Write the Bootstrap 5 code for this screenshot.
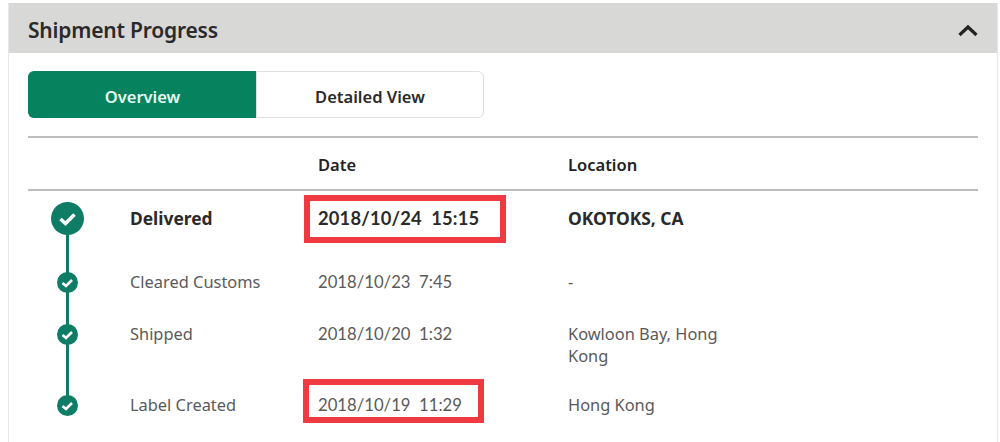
<!DOCTYPE html>
<html lang="en">
<head>
  <meta charset="UTF-8">
  <title>Shipment Progress</title>
  <link rel="stylesheet" href="https://cdn.jsdelivr.net/npm/bootstrap@5.3.3/dist/css/bootstrap.min.css">
  <style>
    body { background: #fff; font-family: "Noto Sans", sans-serif; color: #5a5a5a; overflow: hidden; }
    .ship-panel { margin: 3px 2px 0 8px; height: 439px; border-left: 1px solid #e8e8e8; border-right: 1px solid #e8e8e8; }
    .ship-head { height: 50px; background: #d8d8d6; padding: 5px 19px 0; color: #2a2a2a; }
    .ship-head h2 { font-size: 21px; font-weight: 600; margin: 0; letter-spacing: -.2px; }
    .ship-body { padding: 18px 19px 0; }
    .ship-tabs { width: 456px; height: 47px; margin-bottom: 18px; }
    .ship-tabs .btn { flex: 1 1 50%; font-size: 16.5px; font-weight: 600; color: #2a2a2a; border: 1px solid #e0e0e0; background: #fff; border-radius: 6px; padding: 5px 0 0; }
    .ship-tabs .btn:first-child { border-top-right-radius: 0; border-bottom-right-radius: 0; border-right: 0; }
    .ship-tabs .btn:last-child { border-top-left-radius: 0; border-bottom-left-radius: 0; }
    .ship-tabs .btn.active { background: #07825f; border-color: #07825f; color: #e6fbf3; }
    .track-table { --bs-table-color: #5a5a5a; table-layout: fixed; width: 100%; margin: 0; border-collapse: separate; border-spacing: 0; border-top: 2px solid #bdbdbd; font-size: 16.4px; }
    .track-table th, .track-table td { padding: 0; border: 0; vertical-align: top; color: #5a5a5a; background: none; }
    .track-table thead th { height: 53px; padding-top: 4px; border-bottom: 2px solid #bdbdbd; vertical-align: middle; font-weight: 600; font-size: 16.5px; color: #222; }
    .col-rail { width: 102px; }
    .col-name { width: 188px; }
    .col-date { width: 250px; }
    .track-table tbody td { padding-top: 12px; line-height: 22px; }
    .track-table .track-row-main td { height: 68px; padding-top: 16px; font-size: 17.4px; font-weight: 700; color: #2a2a2a; }
    .track-row-a td { height: 52px; }
    .track-row-b td { height: 63px; }
    .track-table .track-row-c td { height: 60px; padding-top: 20px; }
    .track-table tbody .rail-cell { position: relative; padding: 0; }
    .rail-line { position: absolute; left: 38px; width: 3px; top: 0; bottom: 0; background: #0f7d65; }
    .track-row-main .rail-line { top: 28px; }
    .track-row-c .rail-line { bottom: 29px; }
    .rail-dot { position: absolute; left: 29px; top: 13px; width: 21px; height: 21px; }
    .track-row-main .rail-dot { left: 23px; top: 11px; width: 33px; height: 33px; }
    .track-row-c .rail-dot { top: 21px; }
    .date-wrap { position: relative; display: block; font-family: Lato, sans-serif; font-size: 16.7px; white-space: pre; }
    .track-row-main .date-wrap { font-size: 18.3px; letter-spacing: .2px; }
    .mark-box { position: absolute; border: 6px solid #ee3a40; pointer-events: none; }
    .mark-box-a { left: -14px; top: -12px; width: 202px; height: 48px; }
    .mark-box-b { left: -15px; top: -15px; width: 181px; height: 44px; }
    .loc-text { max-width: 160px; }
  </style>
</head>
<body>
  <div class="ship-panel">
    <div class="ship-head d-flex align-items-center justify-content-between">
      <h2>Shipment Progress</h2>
      <svg width="20" height="13" viewBox="0 0 20 13" aria-hidden="true"><path d="M1.5 11 10 3l8.5 8" fill="none" stroke="#222" stroke-width="3.2"/></svg>
    </div>
    <div class="ship-body">
      <div class="ship-tabs d-flex">
        <button class="btn active" type="button">Overview</button>
        <button class="btn" type="button">Detailed View</button>
      </div>
      <table class="table track-table">
        <colgroup><col class="col-rail"><col class="col-name"><col class="col-date"><col></colgroup>
        <thead>
          <tr><th></th><th></th><th>Date</th><th>Location</th></tr>
        </thead>
        <tbody>
          <tr class="track-row-main">
            <td class="rail-cell"><span class="rail-line"></span>
              <svg class="rail-dot" viewBox="0 0 33 33" aria-hidden="true"><circle cx="16.5" cy="16.5" r="16.5" fill="#0f7d65"/><path d="M9.5 17l5 4.5 9-9" fill="none" stroke="#fff" stroke-width="3.6"/></svg>
            </td>
            <td>Delivered</td>
            <td><span class="date-wrap">2018/10/24  15:15<span class="mark-box mark-box-a"></span></span></td>
            <td>OKOTOKS, CA</td>
          </tr>
          <tr class="track-row-a">
            <td class="rail-cell"><span class="rail-line"></span>
              <svg class="rail-dot" viewBox="0 0 21 21" aria-hidden="true"><circle cx="10.5" cy="10.5" r="10.5" fill="#0f7d65"/><path d="M5.5 11l3.5 3 6-6" fill="none" stroke="#fff" stroke-width="2.6"/></svg>
            </td>
            <td>Cleared Customs</td>
            <td><span class="date-wrap">2018/10/23  7:45</span></td>
            <td>-</td>
          </tr>
          <tr class="track-row-b">
            <td class="rail-cell"><span class="rail-line"></span>
              <svg class="rail-dot" viewBox="0 0 21 21" aria-hidden="true"><circle cx="10.5" cy="10.5" r="10.5" fill="#0f7d65"/><path d="M5.5 11l3.5 3 6-6" fill="none" stroke="#fff" stroke-width="2.6"/></svg>
            </td>
            <td>Shipped</td>
            <td><span class="date-wrap">2018/10/20  1:32</span></td>
            <td><div class="loc-text">Kowloon Bay, Hong Kong</div></td>
          </tr>
          <tr class="track-row-c">
            <td class="rail-cell"><span class="rail-line"></span>
              <svg class="rail-dot" viewBox="0 0 21 21" aria-hidden="true"><circle cx="10.5" cy="10.5" r="10.5" fill="#0f7d65"/><path d="M5.5 11l3.5 3 6-6" fill="none" stroke="#fff" stroke-width="2.6"/></svg>
            </td>
            <td>Label Created</td>
            <td><span class="date-wrap">2018/10/19  11:29<span class="mark-box mark-box-b"></span></span></td>
            <td>Hong Kong</td>
          </tr>
        </tbody>
      </table>
    </div>
  </div>
  <script src="https://cdn.jsdelivr.net/npm/bootstrap@5.3.3/dist/js/bootstrap.bundle.min.js"></script>
</body>
</html>
